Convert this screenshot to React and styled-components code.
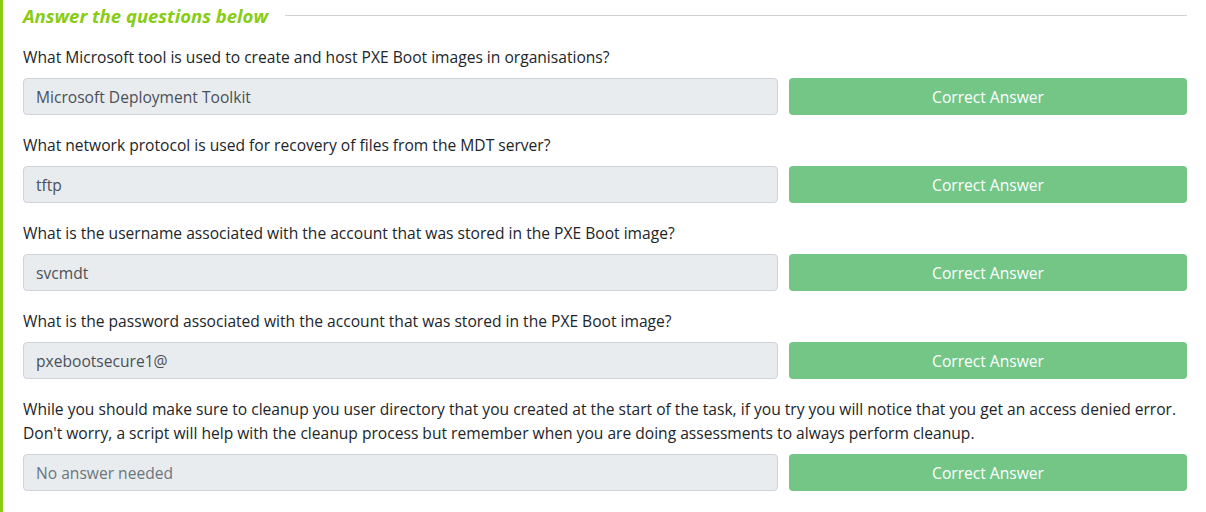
import React from 'react';
import styled, { createGlobalStyle } from 'styled-components';

const GlobalStyle = createGlobalStyle`
  body {
    margin: 0;
    padding: 0;
    background: #fff;
    font-family: 'Open Sans', 'Noto Sans', sans-serif;
    color: #212529;
  }
  *, *::before, *::after {
    box-sizing: border-box;
  }
`;

const Panel = styled.div`
  border-left: 3px solid #88cc14;
  padding: 3px 19px 20px 20px;
  width: 1206px;
  min-height: 512px;
`;

const Heading = styled.div`
  display: flex;
  align-items: center;
  gap: 17px;
  height: 24px;
  margin-bottom: 18px;
`;

const HeadingText = styled.h2`
  margin: 0;
  font-size: 18.5px;
  font-weight: 700;
  font-style: italic;
  color: #88cc14;
  white-space: nowrap;
`;

const Rule = styled.div`
  flex: 1;
  height: 1px;
  background: #d0d0d0;
`;

const Question = styled.div`
  margin-bottom: 18px;
`;

const Prompt = styled.p`
  margin: 0 0 9px;
  font-size: 15.6px;
  line-height: 24px;
`;

const Row = styled.div`
  display: grid;
  grid-template-columns: 1fr 398px;
  gap: 11px;
`;

const Field = styled.div`
  height: 37px;
  display: flex;
  align-items: center;
  padding: 0 12px;
  background: #e9ecef;
  border: 1px solid #ced4da;
  border-radius: 4px;
  font-size: 15.6px;
  color: ${({ $placeholder }) => ($placeholder ? '#6c757d' : '#495057')};
`;

const Button = styled.button`
  height: 37px;
  border: none;
  border-radius: 4px;
  background: #73c686;
  color: #fff;
  font-family: inherit;
  font-size: 15.6px;
`;

const questions = [
  {
    text: 'What Microsoft tool is used to create and host PXE Boot images in organisations?',
    answer: 'Microsoft Deployment Toolkit',
  },
  {
    text: 'What network protocol is used for recovery of files from the MDT server?',
    answer: 'tftp',
  },
  {
    text: 'What is the username associated with the account that was stored in the PXE Boot image?',
    answer: 'svcmdt',
  },
  {
    text: 'What is the password associated with the account that was stored in the PXE Boot image?',
    answer: 'pxebootsecure1@',
  },
  {
    text: (
      <>
        While you should make sure to cleanup you user directory that you created at the start of the task, if you try you will notice that you get an access denied error.
        <br />
        Don't worry, a script will help with the cleanup process but remember when you are doing assessments to always perform cleanup.
      </>
    ),
    answer: 'No answer needed',
    placeholder: true,
  },
];

const App = () => (
  <>
    <GlobalStyle />
    <Panel>
      <Heading>
        <HeadingText>Answer the questions below</HeadingText>
        <Rule />
      </Heading>
      {questions.map((q, i) => (
        <Question key={i}>
          <Prompt>{q.text}</Prompt>
          <Row>
            <Field $placeholder={q.placeholder}>{q.answer}</Field>
            <Button>Correct Answer</Button>
          </Row>
        </Question>
      ))}
    </Panel>
  </>
);

export default App;
